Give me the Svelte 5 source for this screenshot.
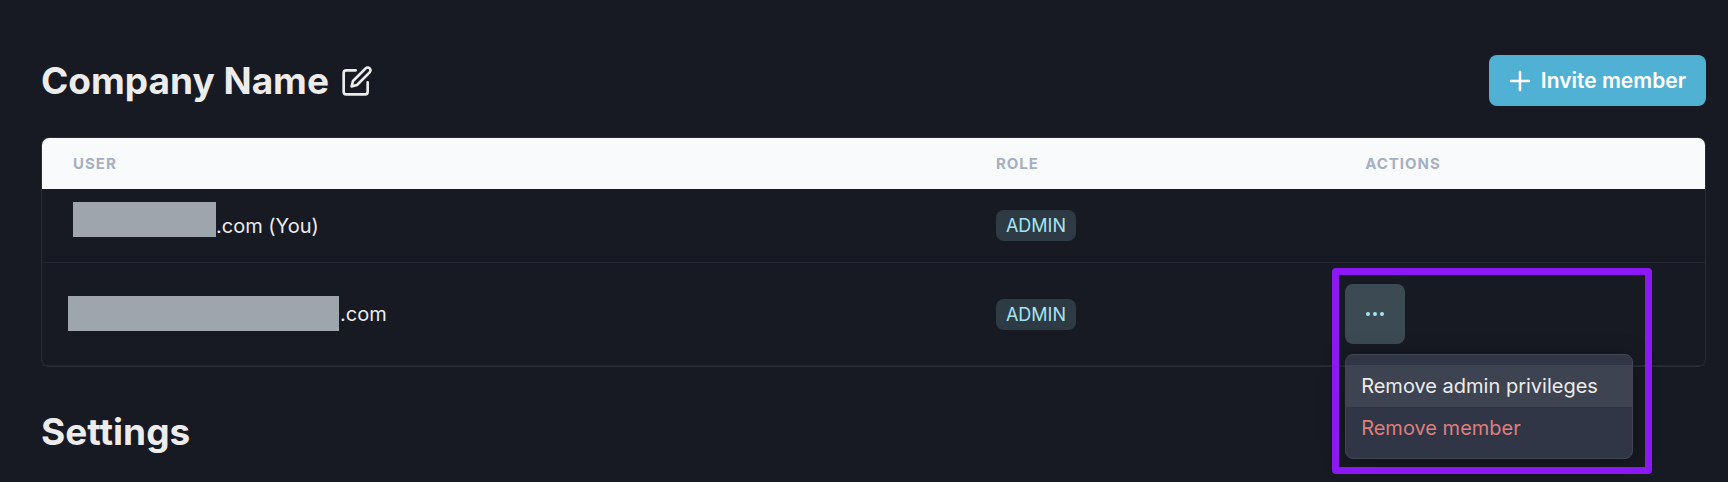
<script lang="ts">
  type Member = {
    id: number;
    suffix: string;
    role: string;
    maskWidth: number;
    isYou: boolean;
  };

  const members: Member[] = [
    { id: 1, suffix: '.com (You)', role: 'Admin', maskWidth: 143, isYou: true },
    { id: 2, suffix: '.com', role: 'Admin', maskWidth: 266, isYou: false }
  ];

  let openMenu: number | null = $state(2);

  function toggleMenu(id: number) {
    openMenu = openMenu === id ? null : id;
  }
</script>

<main class="page">
  <header class="page-header">
    <div class="title">
      <h1>Company Name</h1>
      <button class="edit" type="button" aria-label="Edit company name">
        <svg viewBox="0 0 24 24" aria-hidden="true">
          <path d="M11 4H4a2 2 0 0 0-2 2v14a2 2 0 0 0 2 2h14a2 2 0 0 0 2-2v-7" />
          <path d="M18.5 2.5a2.12 2.12 0 0 1 3 3L12 15l-4 1 1-4z" />
        </svg>
      </button>
    </div>
    <button class="invite" type="button">
      <svg viewBox="0 0 22 22" aria-hidden="true">
        <path d="M11 2v18M2 11h18" />
      </svg>
      Invite member
    </button>
  </header>

  <div class="table-wrap">
    <table>
      <thead>
        <tr>
          <th class="col-user" scope="col">User</th>
          <th class="col-role" scope="col">Role</th>
          <th scope="col">Actions</th>
        </tr>
      </thead>
      <tbody>
        {#each members as member (member.id)}
          <tr>
            <td>
              <div class="email">
                <span class="mask" class:wide={!member.isYou} style:width="{member.maskWidth}px"></span>
                <span>{member.suffix}</span>
              </div>
            </td>
            <td><span class="badge">{member.role}</span></td>
            <td class="actions">
              {#if !member.isYou}
                <div class="menu-anchor">
                  <button
                    class="more"
                    type="button"
                    aria-label="Member actions"
                    aria-expanded={openMenu === member.id}
                    onclick={() => toggleMenu(member.id)}
                  >
                    <svg viewBox="0 0 18 4" aria-hidden="true">
                      <circle cx="2" cy="2" r="2" />
                      <circle cx="9" cy="2" r="2" />
                      <circle cx="16" cy="2" r="2" />
                    </svg>
                  </button>
                  {#if openMenu === member.id}
                    <div class="highlight"></div>
                    <div class="menu" role="menu">
                      <button class="menu-item active" type="button" role="menuitem">Remove admin privileges</button>
                      <button class="menu-item danger" type="button" role="menuitem">Remove member</button>
                    </div>
                  {/if}
                </div>
              {/if}
            </td>
          </tr>
        {/each}
      </tbody>
    </table>
  </div>

  <h2>Settings</h2>
</main>

<style>
  :global(body) {
    background: #171a23;
  }

  .page {
    --text: #ececec;
    --border: #2a2d38;
    --accent: #a4e5f0;
    padding: 55px 22px 26px 41px;
    color: var(--text);
    font-family: Inter, "Liberation Sans", sans-serif;
    font-size: 20px;
    font-variant-ligatures: none;
    line-height: 30px;
  }

  .page * {
    box-sizing: border-box;
  }

  button {
    border: 0;
    color: inherit;
    font: inherit;
    cursor: pointer;
  }

  .page-header {
    display: flex;
    align-items: center;
    justify-content: space-between;
    margin-bottom: 31px;
  }

  .title {
    display: flex;
    align-items: center;
    gap: 12px;
  }

  h1,
  h2 {
    margin: 0;
    font-size: 37px;
    font-weight: 700;
    line-height: 48px;
  }

  h2 {
    margin-top: 41px;
  }

  .edit {
    display: flex;
    padding: 0;
    background: none;
  }

  .edit svg {
    width: 32px;
    height: 32px;
    fill: none;
    stroke: currentColor;
    stroke-width: 2;
    stroke-linecap: round;
    stroke-linejoin: round;
  }

  .invite {
    display: flex;
    align-items: center;
    gap: 10px;
    height: 51px;
    padding: 0 20px;
    border-radius: 8px;
    background: #51b1d4;
    color: #ffffff;
    font-size: 21px;
    font-weight: 600;
  }

  .invite svg {
    width: 22px;
    height: 22px;
    fill: none;
    stroke: currentColor;
    stroke-width: 2.5;
    stroke-linecap: round;
  }

  .table-wrap {
    border: 1px solid var(--border);
    border-radius: 8px;
  }

  table {
    width: 100%;
    border-collapse: separate;
    border-spacing: 0;
    table-layout: fixed;
  }

  th {
    height: 51px;
    padding: 0 31px;
    background: #f9fafc;
    color: #a5b0c2;
    font-size: 15px;
    font-weight: 700;
    line-height: 20px;
    letter-spacing: 1px;
    text-align: left;
    text-transform: uppercase;
  }

  th:first-child {
    border-top-left-radius: 7px;
  }

  th:last-child {
    border-top-right-radius: 7px;
  }

  .col-user {
    width: 55.5%;
  }

  .col-role {
    width: 22.2%;
  }

  td {
    padding: 21px 31px;
    border-bottom: 1px solid #242733;
  }

  .email {
    display: flex;
    align-items: center;
  }

  .mask {
    height: 35px;
    margin: -8px 0 4px;
    background: #9ea5ac;
  }

  .mask.wide {
    box-sizing: content-box;
    margin: 0 1px 2px -5px;
    padding-left: 5px;
  }

  .badge {
    display: block;
    width: fit-content;
    padding: 0 10px;
    border-radius: 8px;
    background: #2f3b44;
    color: var(--accent);
    font-size: 18px;
    line-height: 31px;
    text-transform: uppercase;
  }

  .actions {
    padding-left: 11px;
  }

  .menu-anchor {
    position: relative;
    width: fit-content;
  }

  .more {
    display: grid;
    place-items: center;
    width: 60px;
    height: 60px;
    padding: 0;
    border-radius: 8px;
    background: #3c4a54;
  }

  .more svg {
    width: 18px;
    height: 4px;
    fill: var(--accent);
  }

  .menu {
    position: absolute;
    z-index: 1;
    top: 70px;
    left: 0;
    width: 288px;
    padding: 10px 0 9px;
    border: 1px solid #414654;
    border-radius: 8px;
    background: #303645;
    box-shadow: 0 4px 24px rgba(0, 0, 0, 0.3);
  }

  .menu-item {
    display: block;
    width: 100%;
    padding: 6px 15px;
    background: none;
    text-align: left;
    white-space: nowrap;
  }

  .menu-item.active,
  .menu-item:hover {
    background: #3e4351;
  }

  .menu-item.danger {
    color: #df7e7e;
  }

  .highlight {
    position: absolute;
    z-index: 2;
    top: -16px;
    left: -13px;
    width: 320px;
    height: 206px;
    border: 7px solid #8c18f4;
    border-radius: 4px;
    pointer-events: none;
  }
</style>
